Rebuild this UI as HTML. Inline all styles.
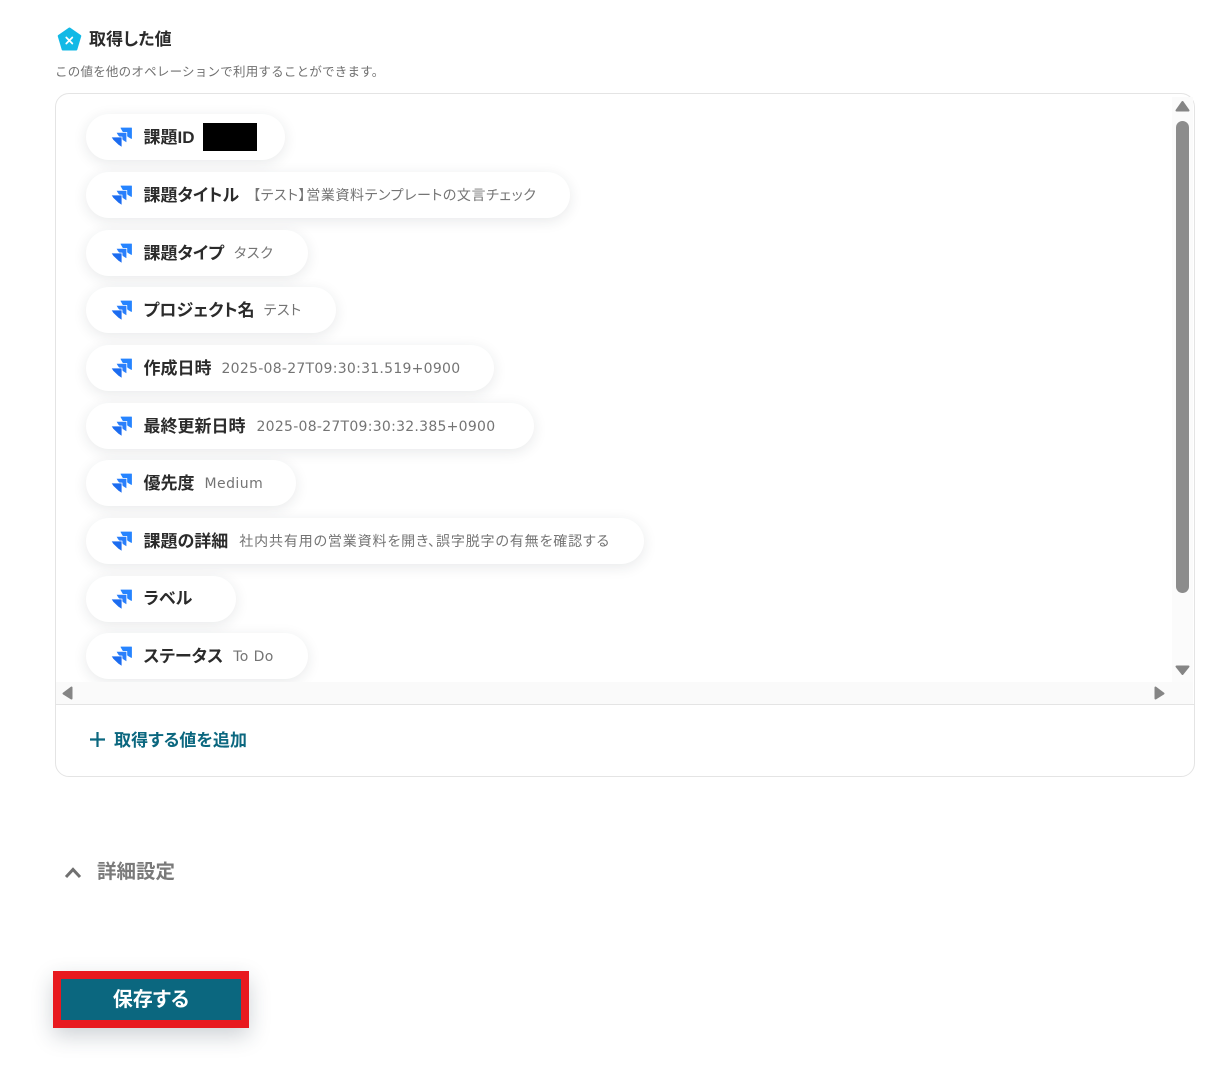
<!DOCTYPE html>
<html lang="ja">
<head>
<meta charset="utf-8">
<style>
html,body{margin:0;padding:0;background:#fff;}
body{width:1225px;height:1066px;position:relative;overflow:hidden;font-family:"Liberation Sans","Noto Sans CJK JP",sans-serif;color:#2b2b2b;}
.abs{position:absolute;white-space:nowrap;}
.p{font-feature-settings:"palt";}
.card{position:absolute;left:55px;top:93px;width:1138px;height:682px;border:1px solid #e4e4e4;border-radius:14px;background:#fff;}
.clip{position:absolute;left:56px;top:94px;width:1116px;height:588px;overflow:hidden;}
.sbv{position:absolute;left:1172px;top:97px;width:21px;height:585px;background:#fbfbfb;}
.sbh{position:absolute;left:56px;top:682px;width:1137px;height:22px;background:#fafafa;}
.sep{position:absolute;left:56px;top:704px;width:1138px;height:1px;background:#e4e4e4;}
.pill{position:absolute;left:30px;height:46px;border-radius:23px;background:#fff;box-shadow:0 3px 14px rgba(30,40,50,.10);}
.pill svg{position:absolute;left:25px;top:13px;}
.k{position:absolute;left:57.5px;top:1px;line-height:46px;font-size:17px;font-weight:700;letter-spacing:0;white-space:nowrap;color:#2b2b2b;font-feature-settings:"palt";}
.v{position:relative;top:-1px;font-family:"DejaVu Sans","Noto Sans CJK JP",sans-serif;font-size:14px;font-weight:400;color:#747474;letter-spacing:.27px;margin-left:10px;}
.c{letter-spacing:.7px;}
</style>
</head>
<body>
<svg class="abs" style="left:57px;top:27px" width="25" height="25" viewBox="0 0 25 25"><path d="M12.5 1.5 L23.3 9 L19.3 22.5 L5.7 22.5 L1.7 9 Z" fill="#12b9e6" stroke="#12b9e6" stroke-width="2" stroke-linejoin="round"/><path d="M9.3 10.5 L15.3 16.5 M15.3 10.5 L9.3 16.5" stroke="#fff" stroke-width="1.8" stroke-linecap="round"/></svg>
<div class="abs p" style="left:89px;top:28px;line-height:24px;font-size:17px;font-weight:700;letter-spacing:.1px">取得した値</div>
<div class="abs" style="left:55px;top:63px;line-height:18px;font-size:12.5px;color:#707070;letter-spacing:.23px">この値を他のオペレーションで利用することができます。</div>

<div class="card"></div>
<div class="clip">
<svg width="0" height="0" style="position:absolute"><defs><g id="j"><path d="M10 1H20.5V11.5L17 9.5L12 4.5Z" fill="#2684ff" stroke="#2684ff" stroke-width=".8" stroke-linejoin="round"/><path d="M5 5.4H15.8V16L12 13.6L7 8.8Z" fill="#2a7ffb" stroke="#fff" stroke-width=".8" stroke-linejoin="round"/><path d="M0 10H11V20.5L7 17.8L2 13Z" fill="#1c6cf0" stroke="#fff" stroke-width=".8" stroke-linejoin="round"/></g></defs></svg>
<div class="pill" style="top:20px;width:199px"><svg width="22" height="22"><use href="#j"/></svg><div class="k">課題ID</div><div style="position:absolute;left:117px;top:9px;width:54px;height:28px;background:#000"></div></div>
<div class="pill" style="top:78px;width:484px"><svg width="22" height="22"><use href="#j"/></svg><div class="k">課題タイトル<span class="v c" style="margin-left:14px;letter-spacing:.61px">【テスト】営業資料テンプレートの文言チェック</span></div></div>
<div class="pill" style="top:136px;width:222px"><svg width="22" height="22"><use href="#j"/></svg><div class="k">課題タイプ<span class="v c">タスク</span></div></div>
<div class="pill" style="top:193px;width:250px"><svg width="22" height="22"><use href="#j"/></svg><div class="k">プロジェクト名<span class="v c" style="margin-left:9px">テスト</span></div></div>
<div class="pill" style="top:251px;width:408px"><svg width="22" height="22"><use href="#j"/></svg><div class="k">作成日時<span class="v">2025-08-27T09:30:31.519+0900</span></div></div>
<div class="pill" style="top:309px;width:448px"><svg width="22" height="22"><use href="#j"/></svg><div class="k">最終更新日時<span class="v" style="margin-left:11px">2025-08-27T09:30:32.385+0900</span></div></div>
<div class="pill" style="top:366px;width:210px"><svg width="22" height="22"><use href="#j"/></svg><div class="k">優先度<span class="v" style="letter-spacing:.45px">Medium</span></div></div>
<div class="pill" style="top:424px;width:558px"><svg width="22" height="22"><use href="#j"/></svg><div class="k">課題の詳細<span class="v" style="letter-spacing:.86px;margin-left:11px">社内共有用の営業資料を開き、誤字脱字の有無を確認する</span></div></div>
<div class="pill" style="top:482px;width:150px"><svg width="22" height="22"><use href="#j"/></svg><div class="k" style="top:0">ラベル</div></div>
<div class="pill" style="top:539px;width:222px"><svg width="22" height="22"><use href="#j"/></svg><div class="k">ステータス<span class="v" style="letter-spacing:.4px">To Do</span></div></div>
</div>

<div class="sbv"></div>
<div class="sbh"></div>
<div class="sep"></div>
<svg class="abs" style="left:1172px;top:97px" width="21" height="590" viewBox="0 0 21 590"><path d="M10.5 5 L16.5 13.5 H4.5 Z" fill="#858585" stroke="#858585" stroke-width="2" stroke-linejoin="round"/><rect x="4" y="24" width="13" height="472" rx="6.5" fill="#8c8c8c"/><path d="M4.5 569.5 H16.5 L10.5 577 Z" fill="#858585" stroke="#858585" stroke-width="2" stroke-linejoin="round"/></svg>
<svg class="abs" style="left:56px;top:683px" width="22" height="22"><path d="M15.5 4.5 V15.5 L7.5 10.5 Z" fill="#858585" stroke="#858585" stroke-width="2" stroke-linejoin="round"/></svg>
<svg class="abs" style="left:1149px;top:683px" width="22" height="22"><path d="M6.5 4.5 V15.5 L14.5 10.5 Z" fill="#858585" stroke="#858585" stroke-width="2" stroke-linejoin="round"/></svg>

<svg class="abs" style="left:89px;top:731px" width="18" height="18"><path d="M8.5 1V16M1 8.5H16" stroke="#0b677f" stroke-width="2.2"/></svg>
<div class="abs p" style="left:114px;top:729px;line-height:24px;font-size:17px;font-weight:700;color:#0b677f;letter-spacing:.1px">取得する値を追加</div>

<svg class="abs" style="left:63px;top:864px" width="20" height="16"><path d="M3 13L10 5.5L17 13" fill="none" stroke="#707070" stroke-width="3"/></svg>
<div class="abs" style="left:97px;top:858px;line-height:28px;font-size:19.5px;font-weight:700;color:#7a7a7a">詳細設定</div>

<div class="abs p" style="left:53px;top:971px;width:196px;height:57px;box-sizing:border-box;border:8px solid #e8191f;background:#0b677f;box-shadow:0 8px 22px rgba(30,50,70,.22);color:#fff;font-size:20px;font-weight:700;line-height:42px;text-align:center">保存する</div>
</body>
</html>
